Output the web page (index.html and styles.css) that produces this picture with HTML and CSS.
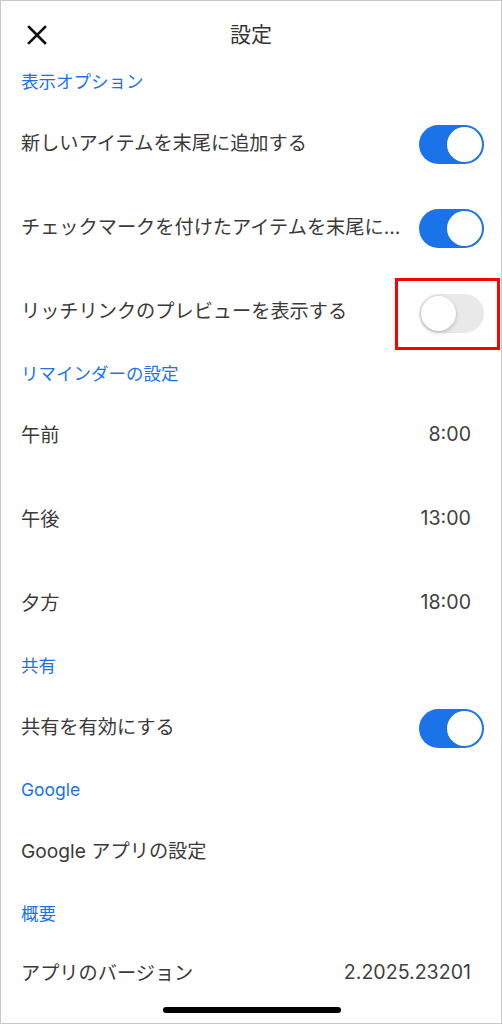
FILE: index.html
```html
<!DOCTYPE html>
<html lang="ja">
  <head>
    <meta charset="UTF-8" />
    <meta name="viewport" content="width=device-width, initial-scale=1.0" />
    <title>設定</title>
    <link rel="stylesheet" href="styles.css">
  </head>
  <body>
    <div class="screen">
      <header class="topbar">
        <button class="close" aria-label="閉じる">
          <svg width="20" height="20" viewBox="0 0 20 20">
            <path d="M2 2 L18 18 M18 2 L2 18" stroke="#111" stroke-width="2.6" stroke-linecap="square" fill="none" />
          </svg>
        </button>
        <h1>設定</h1>
      </header>

      <div class="section-title">表示オプション</div>
      <div class="row">
        <span class="label">新しいアイテムを末尾に追加する</span>
        <span class="toggle on"><span class="knob"></span></span>
      </div>
      <div class="row">
        <span class="label">チェックマークを付けたアイテムを末尾に…</span>
        <span class="toggle on"><span class="knob"></span></span>
      </div>
      <div class="row">
        <span class="label">リッチリンクのプレビューを表示する</span>
        <span class="highlight">
          <span class="toggle"><span class="knob"></span></span>
        </span>
      </div>

      <div class="section-title">リマインダーの設定</div>
      <div class="row">
        <span class="label">午前</span>
        <span class="value">8:00</span>
      </div>
      <div class="row">
        <span class="label">午後</span>
        <span class="value">13:00</span>
      </div>
      <div class="row">
        <span class="label">夕方</span>
        <span class="value">18:00</span>
      </div>

      <div class="section-title">共有</div>
      <div class="row">
        <span class="label">共有を有効にする</span>
        <span class="toggle on"><span class="knob"></span></span>
      </div>

      <div class="section-title">Google</div>
      <div class="row">
        <span class="label">Google アプリの設定</span>
      </div>

      <div class="section-title">概要</div>
      <div class="row last">
        <span class="label">アプリのバージョン</span>
        <span class="value">2.2025.23201</span>
      </div>

      <div class="home-bar"></div>
    </div>
  </body>
</html>
```

FILE: styles.css
```css
body {
  margin: 0;
  padding: 0;
  background-color: #fff;
  font-family: Inter, "Noto Sans CJK JP", sans-serif;
  color: #3a3a3a;
}
.screen {
  width: 502px;
  height: 1024px;
  box-sizing: border-box;
  border: 1px solid #c8c8c8;
  overflow: hidden;
  display: flex;
  flex-direction: column;
  position: relative;
}
.topbar {
  height: 61px;
  display: flex;
  align-items: center;
  justify-content: center;
  position: relative;
}
.topbar h1 {
  margin: 0;
  font-size: 21px;
  font-weight: 400;
  color: #333;
  padding-top: 2px;
}
.close {
  position: absolute;
  left: 24px;
  top: 22px;
  width: 24px;
  height: 24px;
  padding: 0;
  border: none;
  background: none;
  display: flex;
  align-items: center;
  justify-content: center;
}
.section-title {
  height: 40px;
  box-sizing: border-box;
  padding: 8px 20px 0;
  font-size: 17.5px;
  line-height: 24px;
  color: #1a73e8;
}
.row {
  height: 84px;
  flex-shrink: 0;
  display: flex;
  align-items: center;
  padding: 0 17px 0 20px;
  font-size: 19.2px;
}
.row .label {
  flex: 1;
  min-width: 0;
  white-space: nowrap;
  padding: 0 16px 4px 0;
}
.row .value {
  padding: 0 13px 4px 0;
  font-size: 19.6px;
  color: #3f3f3f;
}
.row.last {
  height: 80px;
}
.toggle {
  width: 65px;
  height: 39px;
  border-radius: 20px;
  background-color: #e9e9ea;
  position: relative;
  flex-shrink: 0;
  display: block;
}
.toggle .knob {
  position: absolute;
  top: 2px;
  left: 2px;
  width: 35px;
  height: 35px;
  border-radius: 50%;
  background-color: #fff;
  box-shadow: 0 2px 4px rgba(0, 0, 0, 0.18), 0 0 0 0.5px rgba(0, 0, 0, 0.08);
}
.toggle.on {
  background-color: #1a73e8;
}
.toggle.on .knob {
  left: 28px;
  box-shadow: none;
}
.highlight {
  border: 3px solid #f00;
  padding: 13px 13px 14px 21px;
  margin-right: -16px;
  margin-top: 4px;
}
.home-bar {
  position: absolute;
  left: 162px;
  bottom: 10px;
  width: 178px;
  height: 6px;
  border-radius: 3px;
  background-color: #000;
}
```
